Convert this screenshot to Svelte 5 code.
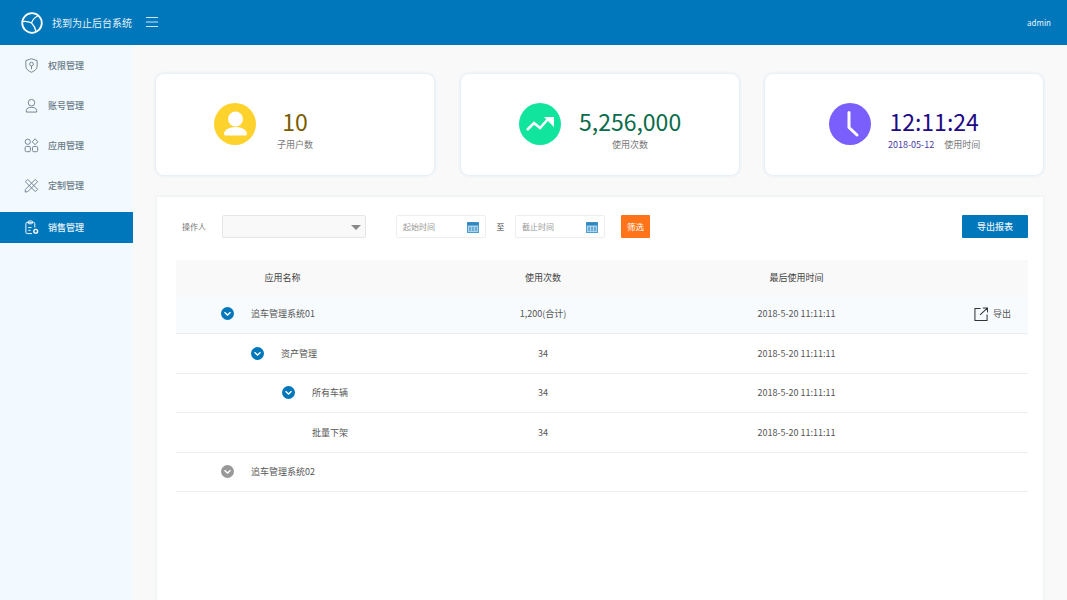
<script>
  const rows = [
    { name: '追车管理系统01', count: '1,200(合计)', time: '2018-5-20 11:11:11', level: 0, toggle: 'blue', hl: true, exp: true },
    { name: '资产管理', count: '34', time: '2018-5-20 11:11:11', level: 1, toggle: 'blue' },
    { name: '所有车辆', count: '34', time: '2018-5-20 11:11:11', level: 2, toggle: 'blue' },
    { name: '批量下架', count: '34', time: '2018-5-20 11:11:11', level: 2 },
    { name: '追车管理系统02', count: '', time: '', level: 0, toggle: 'gray' }
  ];
</script>

<div class="page">
  <header class="top">
    <svg class="logo" viewBox="0 0 22 22" width="22" height="22">
      <circle cx="11" cy="11" r="9.800" fill="none" stroke="#fff" stroke-width="1.800"/>
      <path d="M1.500 9.500 C5 9 8 9.500 10.500 11 C11.500 8 14 5 17.500 3.500 M10.500 11 C12.500 13 14.500 16 15 19.500" fill="none" stroke="#fff" stroke-width="1.300"/>
    </svg>
    <span class="brand">找到为止后台系统</span>
    <svg class="burger" viewBox="0 0 12 10" width="12" height="10"><path d="M0 .5H12M0 5H12M0 9.500H12" stroke="#cfe4f2" stroke-width="1"/></svg>
    <span class="user">admin</span>
  </header>

  <div class="body">
    <nav class="side">
      <div class="item">
        <svg viewBox="0 0 16 16" width="15" height="15" fill="none" stroke="#6f7f8c" stroke-width="1"><path d="M8 .8l6 2v6.200c0 3-3 5-6 6.200-3-1.200-6-3.200-6-6.200V2.800z"/><circle cx="8" cy="6.500" r="2"/><path d="M8 8.500V12"/></svg>
        <span>权限管理</span>
      </div>
      <div class="item">
        <svg viewBox="0 0 16 16" width="15" height="15" fill="none" stroke="#6f7f8c" stroke-width="1"><circle cx="8" cy="5" r="3.500"/><path d="M2.500 15v-1.500C2.500 11 4.500 10 8 10s5.500 1 5.500 3.500V15z"/></svg>
        <span>账号管理</span>
      </div>
      <div class="item">
        <svg viewBox="0 0 16 16" width="15" height="15" fill="none" stroke="#6f7f8c" stroke-width="1"><circle cx="4" cy="4" r="2.800"/><path d="M11.800 .8l3 3.200-3 3.200-3-3.200z"/><rect x="1.200" y="9" width="5.600" height="5.600" rx="1.400"/><rect x="9" y="9" width="5.600" height="5.600" rx="1.400"/></svg>
        <span>应用管理</span>
      </div>
      <div class="item">
        <svg viewBox="0 0 16 16" width="15" height="15" fill="none" stroke="#6f7f8c" stroke-width="1"><path d="M1.500 4L4 1.500l10.500 10.500-2.500 2.500z"/><path d="M12 1.500l2.500 2.500L4 14.500l-2.800.5.300-2.800z"/></svg>
        <span>定制管理</span>
      </div>
      <div class="item active">
        <svg viewBox="0 0 16 16" width="15" height="15" fill="none" stroke="#fff" stroke-width="1"><path d="M8.500 14.500H3.500a1.500 1.500 0 0 1-1.500-1.500V4A1.500 1.500 0 0 1 3.500 2.500H10A1.500 1.500 0 0 1 11.500 4v4"/><rect x="4.500" y="1" width="4.500" height="3" rx=".8"/><path d="M4.500 8h3.500M4.500 11h2.500"/><circle cx="12.500" cy="12" r="2" stroke-width="1.500"/></svg>
        <span>销售管理</span>
      </div>
    </nav>

    <main class="main">
      <section class="cards">
        <article class="card c1">
          <div class="disc yellow">
            <svg viewBox="0 0 42 42" width="42" height="42"><circle cx="21.500" cy="16" r="7.500" fill="#fff"/><path d="M10 31c0-4 5-7 11.500-7S33 27 33 31c0 1-1 1.500-2 1.500H12c-1 0-2-.5-2-1.500z" fill="#fff"/></svg>
          </div>
          <div class="info">
            <div class="num brown">10</div>
            <div class="sub">子用户数</div>
          </div>
        </article>
        <article class="card c2">
          <div class="disc green">
            <svg viewBox="0 0 42 42" width="42" height="42"><path d="M8 27l7-7 6 5 9-10" fill="none" stroke="#fff" stroke-width="2.600"/><path d="M25 14h10v10z" fill="#fff"/></svg>
          </div>
          <div class="info">
            <div class="num teal">5,256,000</div>
            <div class="sub">使用次数</div>
          </div>
        </article>
        <article class="card c3">
          <div class="disc violet">
            <svg viewBox="0 0 42 42" width="42" height="42"><path d="M20 9.500V24.500L28 32" fill="none" stroke="#fff" stroke-width="3" stroke-linecap="round" stroke-linejoin="round"/></svg>
          </div>
          <div class="info">
            <div class="num navy">12:11:24</div>
            <div class="sub"><span class="date">2018-05-12</span><span class="gap">使用时间</span></div>
          </div>
        </article>
      </section>

      <section class="panel">
        <div class="filters">
          <span class="lab">操作人</span>
          <div class="select"><i class="caret"></i></div>
          <div class="date-in first">
            <span>起始时间</span>
            <svg viewBox="0 0 12 12" width="12" height="12"><rect x=".5" y="1.500" width="11" height="10" fill="#a9d3ea" stroke="#4a9ed0"/><rect x=".5" y="1.500" width="11" height="3" fill="#2f86c0"/><path d="M3 6v4M6 6v4M9 6v4" stroke="#2f86c0"/></svg>
          </div>
          <span class="to">至</span>
          <div class="date-in">
            <span>截止时间</span>
            <svg viewBox="0 0 12 12" width="12" height="12"><rect x=".5" y="1.500" width="11" height="10" fill="#a9d3ea" stroke="#4a9ed0"/><rect x=".5" y="1.500" width="11" height="3" fill="#2f86c0"/><path d="M3 6v4M6 6v4M9 6v4" stroke="#2f86c0"/></svg>
          </div>
          <button class="go">筛选</button>
          <button class="export">导出报表</button>
        </div>

        <div class="table">
          <div class="row head">
            <div class="cname">应用名称</div>
            <div class="ccount">使用次数</div>
            <div class="ctime">最后使用时间</div>
          </div>
          {#each rows as r}
            <div class="row" class:hl={r.hl}>
              <div class="cell-name l{r.level}">
                {#if r.toggle}
                  <span class="tog {r.toggle}">
                    <svg viewBox="0 0 13 13" width="13" height="13"><path d="M3.500 5.200L6.500 8l3-2.800" fill="none" stroke="#fff" stroke-width="1.400"/></svg>
                  </span>
                {:else}
                  <span class="tog none"></span>
                {/if}
                <span>{r.name}</span>
              </div>
              <div class="ccount">{r.count}</div>
              <div class="ctime">{r.time}</div>
              {#if r.exp}
                <div class="out">
                  <svg viewBox="0 0 15 15" width="14" height="14" fill="none" stroke="#333" stroke-width="1.100"><path d="M7 1.500H1v13h13V8M6.500 8.500L14 1.500M9.500 1H14.500V6"/></svg>
                  <span>导出</span>
                </div>
              {/if}
            </div>
          {/each}
        </div>
      </section>
    </main>
  </div>
</div>

<style>
  :global(body) { margin: 0; overflow: hidden; }
  .page {
    width: 1067px; height: 600px; overflow: hidden; background: #f9f9f9;
    font-family: "Noto Sans CJK SC", "Noto Sans", sans-serif; color: #555;
  }
  .top {
    height: 45px; background: #0077bb; color: #fff; display: flex; align-items: center;
    padding-left: 21px; box-sizing: border-box;
  }
  .brand { margin-left: 9px; font-size: 10px; color: #e4f1f9; margin-top: -1px; }
  .burger { margin-left: 14px; margin-top: -1px; }
  .user { margin-left: auto; margin-right: 16px; font-size: 8px; color: #e8f3fa; }
  .body { display: flex; height: 555px; }
  .side { width: 133px; flex: none; background: #f2faff; }
  .item {
    height: 40px; display: flex; align-items: center; padding-left: 24px; gap: 9px;
    font-size: 9px; font-weight: 500; color: #6a7986; box-sizing: border-box;
  }
  .item.active {
    height: 31px; margin-top: 7px; background: #0077bb; color: #e6f2f9;
  }
  .main { flex: 1; padding: 29px 24px 0 23px; box-sizing: border-box; min-width: 0; }
  .cards { display: flex; gap: 27px; height: 101px; }
  .card {
    width: 278px; flex: none; background: #fff; border-radius: 8px; display: flex; align-items: center;
    box-shadow: 0 0 3px 1px #dfeaf3; box-sizing: border-box;
  }
  .c3 { margin-left: -1px; }
  .c1 { padding-left: 58px; }
  .c2 { padding-left: 58px; }
  .c3 { padding-left: 64px; }
  .disc { width: 42px; height: 42px; border-radius: 50%; flex: none; display: block; margin-top: -1px; }
  .disc svg { display: block; }
  .yellow { background: #fdd22d; }
  .green { background: #10e49d; }
  .violet { background: #7b5ffc; }
  .info { display: flex; flex-direction: column; align-items: center; margin-left: 21px; margin-top: 10px; }
  .c2 .info { margin-left: 18px; }
  .c3 .info { margin-left: 17px; }
  .num { font-size: 23px; line-height: 28px; margin-bottom: 3.500px; }
  .brown { color: #7a5c00; }
  .teal { color: #0a6b4a; }
  .navy { color: #1f0a85; }
  .sub { font-size: 9px; line-height: 14px; color: #777; }
  .date { color: #4a3aa3; }
  .gap { margin-left: 10px; }

  .panel {
    margin-top: 22px; height: 420px; margin-left: 1px; width: 886px; background: #fff; box-sizing: border-box;
    box-shadow: 0 0 3px 1px #ecf0f4; padding: 18px 15px 0 19px;
  }
  .filters { display: flex; align-items: center; height: 23px; font-size: 8px; padding-left: 6px; }
  .filters span { margin-top: -1px; }
  .lab { color: #777; width: 40px; flex: none; }
  .select {
    width: 144px; height: 23px; border: 1px solid #e6e6e6; border-radius: 2px; box-sizing: border-box;
    background: #f9f9f9; position: relative; flex: none;
  }
  .caret {
    position: absolute; right: 4px; top: 9px; width: 0; height: 0;
    border-left: 5px solid transparent; border-right: 5px solid transparent; border-top: 5px solid #888;
  }
  .date-in {
    width: 90px; height: 23px; border: 1px solid #eee; border-radius: 2px; box-sizing: border-box;
    display: flex; align-items: center; justify-content: space-between; padding: 0 6px; color: #999; flex: none;
  }
  .date-in svg { flex: none; }
  .first { margin-left: 30px; }
  .to { width: 29px; text-align: center; color: #444; flex: none; }
  .go {
    margin-left: 16px; width: 29px; height: 23px; border: 0; padding: 0 0 1px; background: #ff7418; color: #fff;
    font: inherit; font-size: 8.500px; border-radius: 1px;
  }
  .export {
    margin-left: auto; width: 66px; height: 23px; border: 0; padding: 0 0 1px; background: #0077bb; color: #e8f3fa;
    font: inherit; font-size: 9px; font-weight: 500; border-radius: 1px;
  }
  .table { margin-top: 22px; }
  .row {
    position: relative; height: 39.500px; display: flex; align-items: center; border-bottom: 1px solid #eee;
    box-sizing: border-box; font-size: 9px; color: #555;
  }
  .row.head { height: 34.500px; background: #f9f9f9; border-bottom: 0; color: #444; }
  .row.hl { background: #f7fbfe; }
  .cname { width: 213px; text-align: center; flex: none; }
  .cell-name { width: 213px; display: flex; align-items: center; flex: none; gap: 17px; box-sizing: border-box; }
  .l0 { padding-left: 45px; }
  .l1 { padding-left: 75px; }
  .l2 { padding-left: 106px; }
  .ccount { width: 308px; text-align: center; flex: none; }
  .ctime { width: 199px; text-align: center; flex: none; }
  .tog { width: 13px; height: 13px; border-radius: 50%; flex: none; display: block; }
  .tog svg { display: block; }
  .tog.blue { background: #0077bb; }
  .tog.gray { background: #999; }
  .tog.none { background: none; }
  .out {
    position: absolute; right: 17px; top: 12px; display: flex; align-items: center; gap: 5px; color: #555;
  }
  .out svg { display: block; }
</style>
